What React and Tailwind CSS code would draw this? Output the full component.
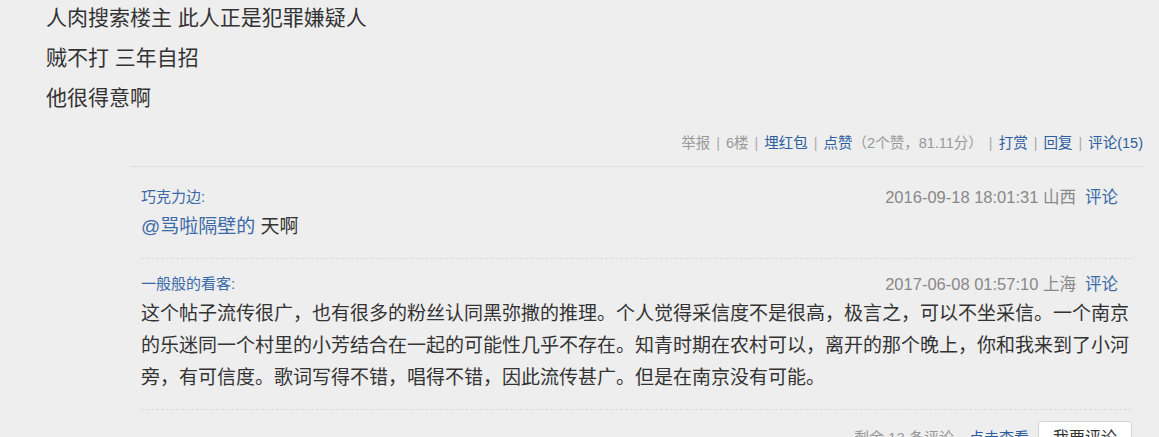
import React from 'react';

// One floor of a forum thread, with its nested comments
const comments = [
    {
        name: '巧克力边:',
        time: '2016-09-18 18:01:31 山西',
        body: (
            <div className="leading-[32px]">
                <span className="text-[#3b6aa8]">@骂啦隔壁的</span> 天啊
            </div>
        ),
    },
    {
        name: '一般般的看客:',
        time: '2017-06-08 01:57:10 上海',
        body: (
            <div className="leading-[32px]">
                <div>这个帖子流传很广，也有很多的粉丝认同黑弥撒的推理。个人觉得采信度不是很高，极言之，可以不坐采信。一个南京</div>
                <div>的乐迷同一个村里的小芳结合在一起的可能性几乎不存在。知青时期在农村可以，离开的那个晚上，你和我来到了小河</div>
                <div>旁，有可信度。歌词写得不错，唱得不错，因此流传甚广。但是在南京没有可能。</div>
            </div>
        ),
    },
];

const Sep = () => <span className="text-[#aaa] mx-[6px]">|</span>;

const App = () => {
    return (
        <div
            className="w-[1159px] h-[437px] overflow-hidden bg-[#eeeeee] text-[#333]"
            style={{ fontFamily: '"Liberation Sans", "Noto Sans CJK SC", sans-serif' }}
        >
            {/* Post body */}
            <div className="pl-[46px] -mt-[2px] text-[21px] leading-[40px] text-[#333]">
                <p>人肉搜索楼主 此人正是犯罪嫌疑人</p>
                <p>贼不打 三年自招</p>
                <p>他很得意啊</p>
            </div>

            {/* Action bar */}
            <div className="flex justify-end pr-[16px] mt-[13px] text-[14.5px] leading-[24px] text-[#999]">
                <span>举报</span>
                <Sep />
                <span>6楼</span>
                <Sep />
                <span className="text-[#2c5d9f]">埋红包</span>
                <Sep />
                <span className="text-[#2c5d9f]">点赞</span>
                <span>（2个赞，81.11分）</span>
                <Sep />
                <span className="text-[#2c5d9f]">打赏</span>
                <Sep />
                <span className="text-[#2c5d9f]">回复</span>
                <Sep />
                <span className="text-[#2c5d9f]">评论(15)</span>
            </div>

            {/* Comments box */}
            <div className="ml-[130px] mr-[15px] mt-[11px] border-t border-[#dcdcdc] pl-[11px] pr-[12px] pt-[16px]">
                {comments.map((c, i) => (
                    <div key={i} className="border-b border-dashed border-[#dadada] pb-[15px] mb-[11px]">
                        <div className="flex justify-between items-center leading-[28px] pr-[14px]">
                            <span className="text-[15px] text-[#3b6aa8]">{c.name}</span>
                            <span className="text-[16.5px] text-[#888]">
                                {c.time}
                                <span className="text-[#3b6aa8] ml-[9px]">评论</span>
                            </span>
                        </div>
                        <div className="text-[19px] text-[#333]">{c.body}</div>
                    </div>
                ))}
                <div className="flex justify-end items-center gap-[9px] mt-[3px]">
                    <span className="text-[15px] text-[#999]">
                        剩余 13 条评论，<span className="text-[#2c5d9f]">点击查看</span>
                    </span>
                    <button className="h-[34px] px-[14px] bg-white border border-[#d5d5d5] rounded-[3px] text-[16px] text-[#333]">
                        我要评论
                    </button>
                </div>
            </div>
        </div>
    );
};

export default App;
